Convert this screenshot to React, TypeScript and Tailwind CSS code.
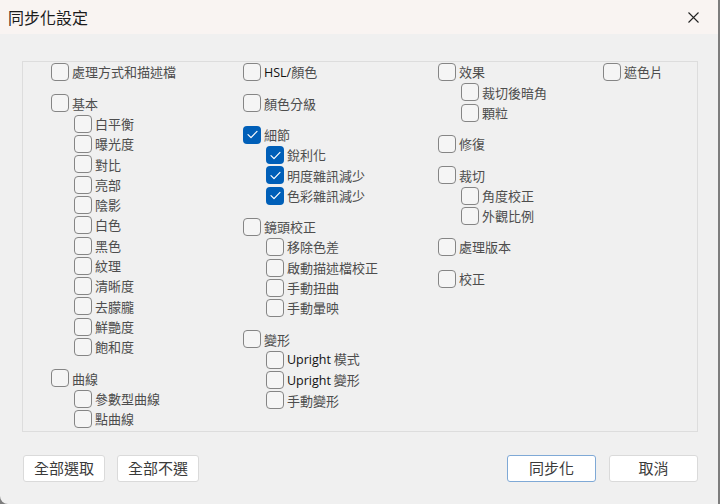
import React from 'react'

type Item = { label: string; checked?: boolean; children?: Item[] }

const columns: Item[][] = [
    [
        { label: '處理方式和描述檔' },
        {
            label: '基本',
            children: [
                { label: '白平衡' },
                { label: '曝光度' },
                { label: '對比' },
                { label: '亮部' },
                { label: '陰影' },
                { label: '白色' },
                { label: '黑色' },
                { label: '紋理' },
                { label: '清晰度' },
                { label: '去朦朧' },
                { label: '鮮艷度' },
                { label: '飽和度' },
            ],
        },
        { label: '曲線', children: [{ label: '參數型曲線' }, { label: '點曲線' }] },
    ],
    [
        { label: 'HSL/顏色' },
        { label: '顏色分級' },
        {
            label: '細節',
            checked: true,
            children: [
                { label: '銳利化', checked: true },
                { label: '明度雜訊減少', checked: true },
                { label: '色彩雜訊減少', checked: true },
            ],
        },
        {
            label: '鏡頭校正',
            children: [
                { label: '移除色差' },
                { label: '啟動描述檔校正' },
                { label: '手動扭曲' },
                { label: '手動暈映' },
            ],
        },
        {
            label: '變形',
            children: [{ label: 'Upright 模式' }, { label: 'Upright 變形' }, { label: '手動變形' }],
        },
    ],
    [
        { label: '效果', children: [{ label: '裁切後暗角' }, { label: '顆粒' }] },
        { label: '修復' },
        { label: '裁切', children: [{ label: '角度校正' }, { label: '外觀比例' }] },
        { label: '處理版本' },
        { label: '校正' },
    ],
    [{ label: '遮色片' }],
]

function Label({ text }: { text: string }) {
    // latin runs render darker, like Segoe UI next to JhengHei
    const parts = text.split(/([A-Za-z\/]+)/).filter(Boolean)
    return (
        <span className="whitespace-pre">
            {parts.map((p, i) =>
                /^[A-Za-z\/]+$/.test(p) ? (
                    <span key={i} className="font-['Open_Sans',sans-serif] font-medium text-[12.5px] text-[#111]">
                        {p}
                    </span>
                ) : (
                    <span key={i}>{p}</span>
                )
            )}
        </span>
    )
}

function Checkbox({ checked }: { checked?: boolean }) {
    if (checked) {
        return (
            <span className="flex h-[18px] w-[18px] shrink-0 items-center justify-center rounded-[4px] bg-[#005fb8]">
                <svg width="11" height="9" viewBox="0 0 11 9" fill="none">
                    <path d="M1 4.6 L4 7.6 L10 1.4" stroke="white" strokeWidth="1.2" strokeLinecap="round" strokeLinejoin="round" />
                </svg>
            </span>
        )
    }
    return <span className="h-[18px] w-[18px] shrink-0 rounded-[4px] border border-[#858585] bg-[#f5f5f5]" />
}

function Row({ item, indent }: { item: Item; indent?: boolean }) {
    return (
        <div className={`flex h-[20.3px] items-center gap-[3px] ${indent ? 'pl-[23px]' : ''}`}>
            <Checkbox checked={item.checked} />
            <Label text={item.label} />
        </div>
    )
}

function Button({ children, primary, width }: { children: React.ReactNode; primary?: boolean; width: string }) {
    return (
        <button
            className={`flex h-[27px] items-center justify-center rounded-[3px] bg-white text-[15px] text-[#3a3a3a] ${width} ${
                primary ? 'border border-[#7fa9d6]' : 'border border-[#dadada]'
            }`}
        >
            {children}
        </button>
    )
}

export default function App() {
    return (
        <div className="h-[504px] w-[720px] bg-[#7d7d7d] font-['Noto_Sans_CJK_TC','Noto_Sans_CJK_SC',sans-serif]">
            <div className="flex h-[504px] w-[718px] flex-col overflow-hidden rounded-bl-[8px] bg-[#f0f0f0]">
                {/* title bar */}
                <div className="flex h-[34px] items-center justify-between bg-[#f9f4f2] pl-[8px] pr-[19px]">
                    <span className="text-[16px] text-[#1b1b1b]">同步化設定</span>
                    <svg width="11" height="11" viewBox="0 0 11 11">
                        <path d="M0.5 0.5 L10.5 10.5 M10.5 0.5 L0.5 10.5" stroke="#222" strokeWidth="1.1" />
                    </svg>
                </div>

                <div className="pl-[22px] pr-[20px] pt-[27px]">
                    <div className="grid h-[371px] grid-cols-[192px_195px_165px_1fr] border border-[#dddddd] pl-[28px] text-[13px] text-[#4d4d4d]">
                        {columns.map((col, ci) => (
                            <div key={ci} className="flex flex-col gap-[11px]">
                                {col.map((g, gi) => (
                                    <div key={gi} className="flex flex-col">
                                        <Row item={g} />
                                        {g.children?.map((c, k) => <Row key={k} item={c} indent />)}
                                    </div>
                                ))}
                            </div>
                        ))}
                    </div>

                    <div className="mt-[23px] flex items-center">
                        <div className="ml-px flex gap-[12px]">
                            <Button width="w-[82px]">全部選取</Button>
                            <Button width="w-[82px]">全部不選</Button>
                        </div>
                        <div className="ml-auto flex gap-[13px]">
                            <Button width="w-[89px]" primary>
                                同步化
                            </Button>
                            <Button width="w-[89px]">取消</Button>
                        </div>
                    </div>
                </div>
            </div>
        </div>
    )
}
